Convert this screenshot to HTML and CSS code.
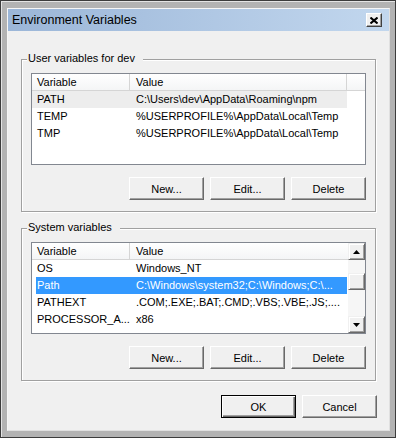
FILE: index.html
```
<!DOCTYPE html>
<html>
  <head>
    <meta charset="utf-8"/>
    <title>Environment Variables</title>
    <link rel="stylesheet" href="styles.css">
  </head>
  <body>
    <div class="window">
      <div class="client">
        <div class="titlebar">
          <span class="title">Environment Variables</span>
          <span class="close">
            <svg width="8" height="7" viewBox="0 0 8 7"><path d="M0.5 0.5 L7.5 6.5 M7.5 0.5 L0.5 6.5" stroke="#000" stroke-width="2" fill="none"/></svg>
          </span>
        </div>
        <div class="content">
          <div class="group">
            <div class="legend">User variables for dev</div>
            <div class="list">
              <div class="list-main">
                <div class="list-head">
                  <div class="hc c1">Variable</div>
                  <div class="hc c2">Value</div>
                  <div class="hc filler"></div>
                </div>
                <div class="row hot"><span class="c1">PATH</span><span class="c2">C:\Users\dev\AppData\Roaming\npm</span></div>
                <div class="row"><span class="c1">TEMP</span><span class="c2">%USERPROFILE%\AppData\Local\Temp</span></div>
                <div class="row"><span class="c1">TMP</span><span class="c2">%USERPROFILE%\AppData\Local\Temp</span></div>
              </div>
            </div>
            <div class="buttons">
              <button class="btn">New...</button>
              <button class="btn">Edit...</button>
              <button class="btn">Delete</button>
            </div>
          </div>
          <div class="group">
            <div class="legend">System variables</div>
            <div class="list">
              <div class="list-main">
                <div class="list-head">
                  <div class="hc c1">Variable</div>
                  <div class="hc c2 last">Value</div>
                </div>
                <div class="row"><span class="c1">OS</span><span class="c2">Windows_NT</span></div>
                <div class="row sel"><span class="c1">Path</span><span class="c2">C:\Windows\system32;C:\Windows;C:\...</span></div>
                <div class="row"><span class="c1">PATHEXT</span><span class="c2">.COM;.EXE;.BAT;.CMD;.VBS;.VBE;.JS;....</span></div>
                <div class="row"><span class="c1">PROCESSOR_A...</span><span class="c2">x86</span></div>
              </div>
              <div class="vscroll">
                <div class="sb-btn">
                  <svg width="7" height="4" viewBox="0 0 7 4"><polygon points="3.5,0 7,4 0,4" fill="#000"/></svg>
                </div>
                <div class="sb-gap"></div>
                <div class="sb-btn"></div>
                <div class="sb-rest"></div>
                <div class="sb-btn">
                  <svg width="7" height="4" viewBox="0 0 7 4"><polygon points="0,0 7,0 3.5,4" fill="#000"/></svg>
                </div>
              </div>
            </div>
            <div class="buttons">
              <button class="btn">New...</button>
              <button class="btn">Edit...</button>
              <button class="btn">Delete</button>
            </div>
          </div>
          <div class="dialog-buttons">
            <button class="btn default">OK</button>
            <button class="btn">Cancel</button>
          </div>
        </div>
      </div>
    </div>
  </body>
</html>
```

FILE: styles.css
```
body {
  margin: 0;
  background: #ffffff;
  font: 11px "Liberation Sans", Arial, sans-serif;
  color: #000000;
}
.window {
  width: 396px;
  height: 438px;
  box-sizing: border-box;
  border: 1px solid #3c3c3c;
  background: #b3b3b3;
  padding: 7px 5px 6px 6px;
  box-shadow: inset 1px 1px #e4e4e4;
}
.client {
  height: 100%;
  box-sizing: border-box;
  border: 1px solid;
  border-color: #f6f6f6 #e0e0e0 #e0e0e0 #f6f6f6;
  display: flex;
  flex-direction: column;
}
.titlebar {
  height: 22px;
  display: flex;
  align-items: center;
  padding-left: 4px;
  background: linear-gradient(to right, #9bb6d8, #c2d7ee);
}
.title {
  flex: 1;
  font-size: 12.5px;
}
.close {
  width: 16px;
  height: 14px;
  box-sizing: border-box;
  margin-right: 7px;
  display: flex;
  align-items: center;
  justify-content: center;
  background: #f0f0f0;
  border: 1px solid;
  border-color: #ffffff #404040 #404040 #ffffff;
  box-shadow: inset -1px -1px #a0a0a0;
}
.close svg {
  display: block;
}
.content {
  flex: 1;
  background: #f0f0f0;
  padding: 28px 13px 0;
}
.group {
  position: relative;
  border: 1px solid #a0a0a0;
  box-shadow: inset 1px 1px #ffffff, 1px 1px #ffffff;
  padding: 13px 9px 11px;
}
.group + .group {
  margin-top: 16px;
}
.legend {
  position: absolute;
  top: -8px;
  left: 5px;
  padding: 0 8px 0 1px;
  line-height: 13px;
  background: #f0f0f0;
}
.list {
  display: flex;
  height: 92px;
  box-sizing: border-box;
  border: 1px solid #828790;
  background: #ffffff;
}
.list-main {
  flex: 1;
  min-width: 0;
  overflow: hidden;
}
.list-head {
  display: flex;
  height: 17px;
  box-sizing: border-box;
  border-bottom: 1px solid #d5d5d5;
  background: linear-gradient(#ffffff, #f4f5f6);
}
.hc {
  box-sizing: border-box;
  line-height: 16px;
  border-right: 1px solid #d5d5d5;
}
.hc.last {
  flex: 1;
  border-right: 0;
}
.filler {
  flex: 1;
  border-right: 0;
}
.row {
  display: flex;
  width: 315px;
  height: 17px;
  line-height: 17px;
  white-space: nowrap;
}
.c1 {
  width: 98px;
  padding-left: 5px;
  box-sizing: border-box;
  overflow: hidden;
}
.c2 {
  width: 217px;
  padding-left: 6px;
  box-sizing: border-box;
  overflow: hidden;
}
.row.hot {
  background: #ededed;
}
.row.sel {
  width: 311px;
  margin-left: 4px;
  background: #3399ff;
  color: #ffffff;
}
.row.sel .c1 {
  width: 94px;
  padding-left: 1px;
}
.vscroll {
  width: 17px;
  display: flex;
  flex-direction: column;
  background: #f6f6f6;
}
.sb-btn {
  height: 17px;
  box-sizing: border-box;
  display: flex;
  align-items: center;
  justify-content: center;
  background: #f0f0f0;
  border: 1px solid;
  border-color: #f0f0f0 #696969 #696969 #f0f0f0;
  box-shadow: inset 1px 1px #ffffff, inset -1px -1px #a0a0a0;
}
.sb-btn svg {
  display: block;
}
.sb-gap {
  height: 13px;
}
.sb-rest {
  flex: 1;
}
.buttons {
  display: flex;
  justify-content: flex-end;
  gap: 6px;
  margin-top: 12px;
}
.btn {
  width: 75px;
  height: 23px;
  box-sizing: border-box;
  padding: 0;
  font: inherit;
  color: #000000;
  background: #f0f0f0;
  border: 1px solid;
  border-color: #ffffff #696969 #696969 #ffffff;
  box-shadow: inset -1px -1px #a0a0a0;
}
.btn.default {
  border-color: #000000;
  box-shadow: inset 1px 1px #ffffff, inset -1px -1px #696969, inset -2px -2px #a0a0a0;
}
.dialog-buttons {
  display: flex;
  justify-content: flex-end;
  gap: 6px;
  margin-top: 14px;
  margin-right: -1px;
}
```
